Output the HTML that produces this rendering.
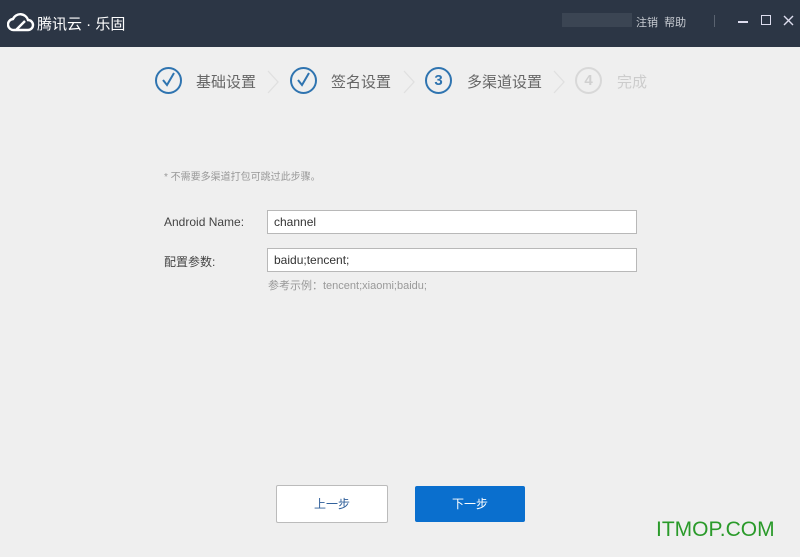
<!DOCTYPE html>
<html><head><meta charset="utf-8"><style>
*{margin:0;padding:0;box-sizing:border-box}
body{width:800px;height:557px;background:#efefef;font-family:"Liberation Sans","Noto Sans CJK SC",sans-serif;position:relative;overflow:hidden}
.hd{position:absolute;left:0;top:0;width:800px;height:47px;background:#2c3645}
.abs{position:absolute;white-space:nowrap}
.circ{position:absolute;width:27px;height:27px;border-radius:50%;border:2px solid #2f74b0;color:#2f74b0;font-size:15px;font-weight:bold;text-align:center;line-height:23px}
.st{position:absolute;top:71px;font-size:15px;color:#666}
.inp{position:absolute;left:267px;width:370px;height:24px;background:#fff;border:1px solid #b8b8b8;font-size:12px;color:#333;padding-left:6px;line-height:22px}
.lbl{position:absolute;left:164px;font-size:12px;color:#444}
.chev{position:absolute;top:70px}
</style></head><body>
<div class="hd"></div>
<svg class="abs" style="left:7px;top:12px" width="28" height="20" viewBox="0 0 28 20"><path d="M7 18 H21 A5 5 0 0 0 21 8 A8 8 0 0 0 6 7 A5.5 5.5 0 0 0 7 18 Z M9 18 L18 9" fill="none" stroke="#fff" stroke-width="2.4"/></svg>
<div class="abs" style="left:37px;top:13px;font-size:15px;color:#fff">腾讯云 · 乐固</div>
<div class="abs" style="left:562px;top:13px;width:70px;height:14px;background:#3b4553"></div>
<div class="abs" style="left:636px;top:14px;font-size:11px;color:#c8ccd2">注销&nbsp;&nbsp;帮助</div>
<div class="abs" style="left:714px;top:15px;width:1px;height:12px;background:#5a6370"></div>
<div class="abs" style="left:738px;top:21px;width:10px;height:1.5px;background:#dde"></div>
<div class="abs" style="left:761px;top:15px;width:10px;height:10px;border:1.5px solid #dde"></div>
<svg class="abs" style="left:783px;top:15px" width="11" height="11" viewBox="0 0 11 11"><path d="M1 1 L10 10 M10 1 L1 10" stroke="#dde" stroke-width="1.4"/></svg>

<div class="circ" style="left:155px;top:67px"><svg width="23" height="23" viewBox="0 0 23 23"><path d="M6 11 L10 16 L17 4" fill="none" stroke="#2f74b0" stroke-width="2"/></svg></div>
<div class="st" style="left:196px">基础设置</div>
<svg class="chev" style="left:266px" width="14" height="24" viewBox="0 0 14 24"><path d="M2 1 L12 12 L2 23" fill="none" stroke="#e0e0e0" stroke-width="1.3"/></svg>
<div class="circ" style="left:290px;top:67px"><svg width="23" height="23" viewBox="0 0 23 23"><path d="M6 11 L10 16 L17 4" fill="none" stroke="#2f74b0" stroke-width="2"/></svg></div>
<div class="st" style="left:331px">签名设置</div>
<svg class="chev" style="left:402px" width="14" height="24" viewBox="0 0 14 24"><path d="M2 1 L12 12 L2 23" fill="none" stroke="#e0e0e0" stroke-width="1.3"/></svg>
<div class="circ" style="left:425px;top:67px">3</div>
<div class="st" style="left:467px">多渠道设置</div>
<svg class="chev" style="left:552px" width="14" height="24" viewBox="0 0 14 24"><path d="M2 1 L12 12 L2 23" fill="none" stroke="#e0e0e0" stroke-width="1.3"/></svg>
<div class="circ" style="left:575px;top:67px;border-color:#d8d8d8;color:#d0d0d0">4</div>
<div class="st" style="left:617px;color:#ccc">完成</div>

<div class="abs" style="left:164px;top:168px;font-size:10px;color:#999">* 不需要多渠道打包可跳过此步骤。</div>
<div class="lbl" style="top:215px">Android Name:</div>
<div class="inp" style="top:210px">channel</div>
<div class="lbl" style="top:253px">配置参数:</div>
<div class="inp" style="top:248px">baidu;tencent;</div>
<div class="abs" style="left:268px;top:277px;font-size:11px;color:#999">参考示例：tencent;xiaomi;baidu;</div>

<div class="abs" style="left:276px;top:485px;width:112px;height:38px;background:#fff;border:1px solid #bbb;border-radius:2px;text-align:center;line-height:36px;font-size:12px;color:#2f5f9a">上一步</div>
<div class="abs" style="left:415px;top:486px;width:110px;height:36px;background:#0a6fce;border-radius:2px;text-align:center;line-height:36px;font-size:12px;color:#fff">下一步</div>
<div class="abs" style="left:656px;top:518px;font-size:21px;color:#2a9a2a">ITMOP.COM</div>
</body></html>
